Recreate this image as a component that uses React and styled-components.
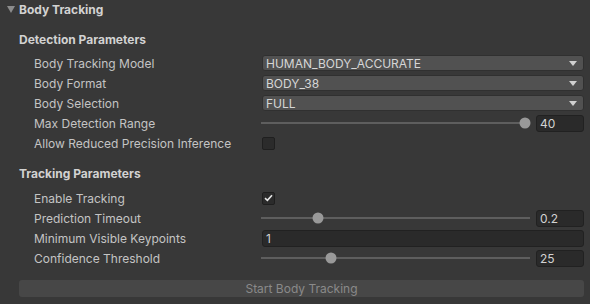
import React from "react";
import styled, { createGlobalStyle } from "styled-components";

const Global = createGlobalStyle`
  body {
    margin: 0;
    background: #383838;
    font-family: Inter, "Noto Sans", "Liberation Sans", sans-serif;
    font-size: 12px;
    color: #c4c4c4;
  }
`;

const Panel = styled.div`
  width: 590px;
  height: 304px;
  background: #383838;
  overflow: hidden;
`;

const Foldout = styled.div`
  height: 18px;
  display: flex;
  align-items: center;
  padding-left: 7px;
  gap: 4px;
  font-weight: 700;
  color: #d2d2d2;
`;

const Arrow = styled.span`
  width: 0;
  height: 0;
  border-left: 4px solid transparent;
  border-right: 4px solid transparent;
  border-top: 7px solid #8c8c8c;
`;

const Section = styled.div`
  padding-top: ${(p) => p.$top}px;
`;

const Heading = styled.div`
  height: 20px;
  display: flex;
  align-items: center;
  padding-left: 19px;
  font-weight: 700;
  color: #d2d2d2;
`;

const Rows = styled.div`
  margin-top: ${(p) => p.$top}px;
`;

const Row = styled.div`
  height: 20px;
  display: grid;
  grid-template-columns: 228px 1fr;
  align-items: center;
  padding-left: 34px;
  padding-right: 6px;
`;

const Label = styled.span`
  white-space: nowrap;
`;

const Dropdown = styled.div`
  height: 16px;
  background: #515151;
  border: 1px solid #303030;
  border-radius: 3px;
  box-sizing: border-box;
  display: flex;
  align-items: center;
  justify-content: space-between;
  padding: 0 6px 0 3px;
  color: #d6d6d6;
`;

const Caret = styled.span`
  width: 0;
  height: 0;
  border-left: 4px solid transparent;
  border-right: 4px solid transparent;
  border-top: 5px solid #d0d0d0;
`;

const SliderWrap = styled.div`
  display: flex;
  align-items: center;
  gap: 6px;
  margin-left: -1px;
`;

const Track = styled.div`
  position: relative;
  flex: 1;
  height: 2px;
  background: #5e5e5e;
`;

const Thumb = styled.div`
  position: absolute;
  top: 50%;
  width: 11px;
  height: 11px;
  border-radius: 50%;
  background: #999999;
  transform: translate(-50%, -50%);
`;

const NumberField = styled.div`
  width: ${(p) => (p.$wide ? "auto" : "48px")};
  height: 17px;
  box-sizing: border-box;
  background: #2a2a2a;
  border: 1px solid #212121;
  border-radius: 3px;
  display: flex;
  align-items: center;
  padding-left: 3px;
  color: #d2d2d2;
`;

const Check = styled.div`
  width: 13px;
  height: 13px;
  box-sizing: border-box;
  background: #2b2b2b;
  border: 1px solid #1f1f1f;
  border-radius: 2px;
  display: flex;
  align-items: center;
  justify-content: center;
`;

const Button = styled.div`
  margin: 12px 6px 0 19px;
  height: 17px;
  background: #474747;
  border-radius: 3px;
  display: flex;
  align-items: center;
  justify-content: center;
  color: #8a8a8a;
`;

function Slider({ value, min, max }) {
  const f = (value - min) / (max - min);
  return (
    <SliderWrap>
      <Track>
        <Thumb style={{ left: `calc(5px + (100% - 10px) * ${f})` }} />
      </Track>
      <NumberField>{value}</NumberField>
    </SliderWrap>
  );
}

function Checkbox({ checked }) {
  return (
    <Check>
      {checked && (
        <svg width="9" height="8" viewBox="0 0 9 8">
          <path d="M1 4.2 L3.4 6.4 L8 1.2" stroke="#e6e6e6" strokeWidth="1.6" fill="none" />
        </svg>
      )}
    </Check>
  );
}

export default function App() {
  return (
    <Panel>
      <Global />
      <Foldout>
        <Arrow />
        Body Tracking
      </Foldout>
      <Section $top={11}>
        <Heading>Detection Parameters</Heading>
        <Rows $top={4}>
          <Row>
            <Label>Body Tracking Model</Label>
            <Dropdown>
              HUMAN_BODY_ACCURATE
              <Caret />
            </Dropdown>
          </Row>
          <Row>
            <Label>Body Format</Label>
            <Dropdown>
              BODY_38
              <Caret />
            </Dropdown>
          </Row>
          <Row>
            <Label>Body Selection</Label>
            <Dropdown>
              FULL
              <Caret />
            </Dropdown>
          </Row>
          <Row>
            <Label>Max Detection Range</Label>
            <Slider value={40} min={0} max={40} />
          </Row>
          <Row>
            <Label>Allow Reduced Precision Inference</Label>
            <Checkbox />
          </Row>
        </Rows>
      </Section>
      <Section $top={10}>
        <Heading>Tracking Parameters</Heading>
        <Rows $top={5}>
          <Row>
            <Label>Enable Tracking</Label>
            <Checkbox checked />
          </Row>
          <Row>
            <Label>Prediction Timeout</Label>
            <Slider value={0.2} min={0} max={1} />
          </Row>
          <Row>
            <Label>Minimum Visible Keypoints</Label>
            <NumberField $wide>1</NumberField>
          </Row>
          <Row>
            <Label>Confidence Threshold</Label>
            <Slider value={25} min={0} max={100} />
          </Row>
        </Rows>
      </Section>
      <Button>Start Body Tracking</Button>
    </Panel>
  );
}
